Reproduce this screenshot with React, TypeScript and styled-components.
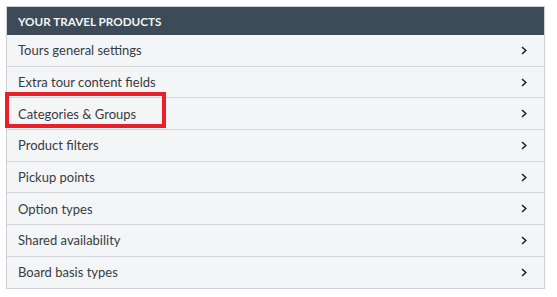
import styled, { createGlobalStyle } from "styled-components";

const GlobalStyle = createGlobalStyle`
  html, body {
    margin: 0;
    padding: 0;
    background: #ffffff;
  }
  body {
    font-family: Lato, "Open Sans", sans-serif;
  }
`;

const Page = styled.div`
  padding: 6px 12px 0 6px;
`;

const Panel = styled.div`
  width: 539px;
  box-sizing: border-box;
  border: 1px solid #cfd2d6;
  background: #f4f5f7;
  box-shadow: 0 1px 1px rgba(0, 0, 0, 0.12);
`;

const Header = styled.div`
  background: #3d4a57;
  color: #f2f4f6;
  height: 28px;
  display: flex;
  align-items: center;
  padding: 0 11px;
  font-size: 11.7px;
  font-weight: 700;
  text-transform: uppercase;
`;

const Row = styled.div`
  position: relative;
  display: flex;
  align-items: center;
  justify-content: space-between;
  height: 30.7px;
  padding: 0 17px 0 11px;
  font-size: 13px;
  color: #383c41;
  & + & {
    border-top: 1px solid #d3d5d8;
  }
`;

const Highlight = styled.div`
  position: absolute;
  left: -2px;
  top: -6px;
  width: 153px;
  height: 28px;
  border: 4px solid #e8202a;
  pointer-events: none;
`;

const Chevron = () => (
  <svg width="6" height="9" viewBox="0 0 6 9">
    <polyline
      points="1,1 4.8,4.5 1,8"
      fill="none"
      stroke="#22262a"
      strokeWidth="1.6"
    />
  </svg>
);

const items = [
  "Tours general settings",
  "Extra tour content fields",
  "Categories & Groups",
  "Product filters",
  "Pickup points",
  "Option types",
  "Shared availability",
  "Board basis types",
];

const App = () => {
  return (
    <Page>
      <GlobalStyle />
      <Panel>
        <Header>Your travel products</Header>
        {items.map((label) => (
          <Row key={label}>
            <span>{label}</span>
            <Chevron />
            {label === "Categories & Groups" && <Highlight />}
          </Row>
        ))}
      </Panel>
    </Page>
  );
};

export default App;
